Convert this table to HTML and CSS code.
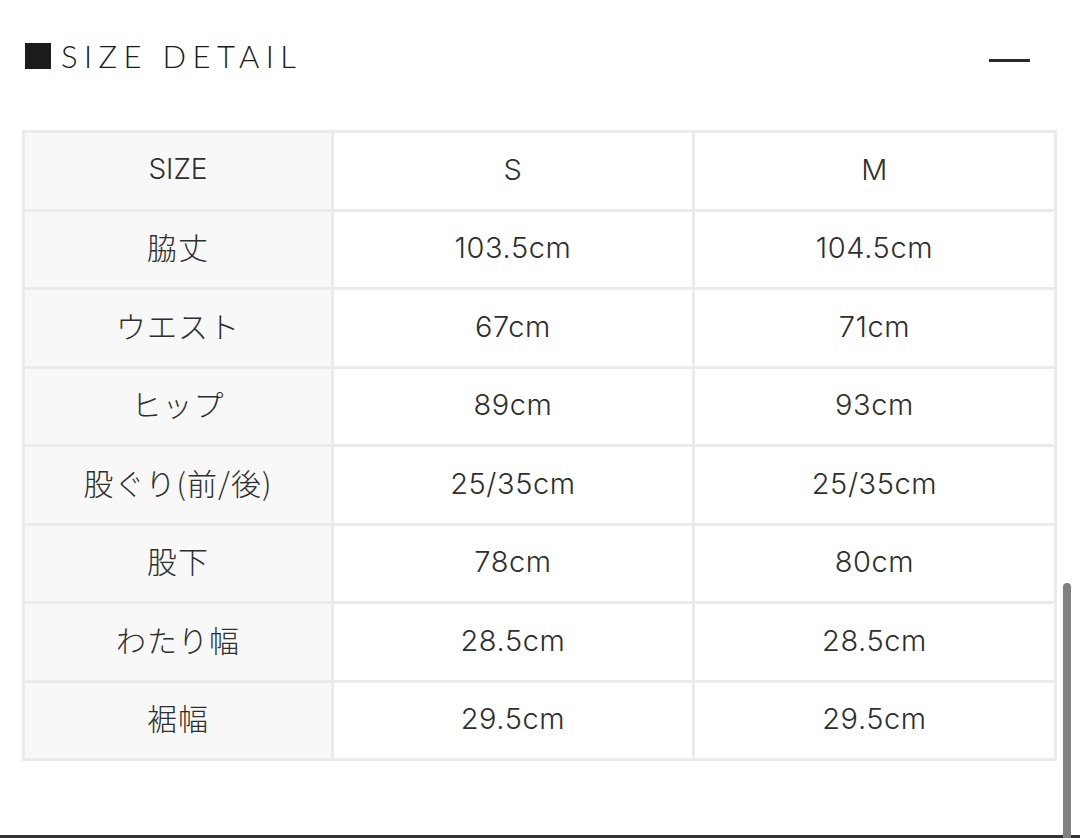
FILE: index.html
```html
<!DOCTYPE html>
<html lang="ja">
<head>
<meta charset="utf-8">
<title>SIZE DETAIL</title>
<link rel="stylesheet" href="styles.css">
</head>
<body>
<div class="page">
  <div class="head">
    <h2 class="title"><span class="sq"></span>SIZE DETAIL</h2>
    <span class="minus"></span>
  </div>
  <table class="size">
    <colgroup><col class="c1"><col class="c2"><col class="c3"></colgroup>
    <tr><th class="lat">SIZE</th><td>S</td><td>M</td></tr>
    <tr><th>脇丈</th><td>103.5cm</td><td>104.5cm</td></tr>
    <tr><th>ウエスト</th><td>67cm</td><td>71cm</td></tr>
    <tr><th>ヒップ</th><td>89cm</td><td>93cm</td></tr>
    <tr><th>股ぐり(前/後)</th><td>25/35cm</td><td>25/35cm</td></tr>
    <tr><th>股下</th><td>78cm</td><td>80cm</td></tr>
    <tr><th>わたり幅</th><td>28.5cm</td><td>28.5cm</td></tr>
    <tr><th>裾幅</th><td>29.5cm</td><td>29.5cm</td></tr>
  </table>
</div>
<div class="bottombar"></div>
<div class="scroll"></div>
</body>
</html>
```
FILE: styles.css
```css
html, body { margin: 0; padding: 0; background: #fff; }
body { width: 1080px; height: 838px; overflow: hidden; position: relative;
  font-family: "Inter", "Noto Sans CJK JP", sans-serif; color: #333; }
.page { padding: 0 23px 0 22px; }
.head { display: flex; align-items: center; justify-content: space-between; height: 112px; padding: 0 27px 0 3px; box-sizing: border-box; }
.title { margin: 0; display: flex; align-items: center; font-family: "Lato", sans-serif; font-weight: 300; font-size: 31px; letter-spacing: 6.4px; color: #1a1a1a; }
.sq { width: 26px; height: 26px; background: #1c1c1c; margin-right: 10px; }
.minus { width: 41px; height: 3px; background: #2a2a2a; margin-top: 8px; }
table.size { width: 1035px; border-collapse: collapse; border: 3px solid #ebebeb; margin-top: 18px; }
col.c1 { width: 310px; }
col.c2 { width: 362px; }
col.c3 { width: 363px; }
th, td { border: 3px solid #ebebeb; height: 78.5px; padding: 0 0 3px; box-sizing: border-box; text-align: center; vertical-align: middle;
  font-weight: 300; font-size: 29px; letter-spacing: 0.6px; color: #2e2e2e; }
th { background: #f8f8f8; font-family: "Noto Sans CJK JP", sans-serif; font-weight: 300; font-size: 30px; letter-spacing: 1px; padding-bottom: 6px; }
th.lat { font-family: "Inter", "Noto Sans CJK JP", sans-serif; font-weight: 300; font-size: 28px; letter-spacing: 0; padding-bottom: 3px; }
td { background: #fff; }
.bottombar { position: absolute; left: 0; right: 0; bottom: 0; height: 3px; background: #333; }
.scroll { position: absolute; left: 1063px; top: 583px; width: 8px; height: 260px; border-radius: 4px; background: #808080; }
```
